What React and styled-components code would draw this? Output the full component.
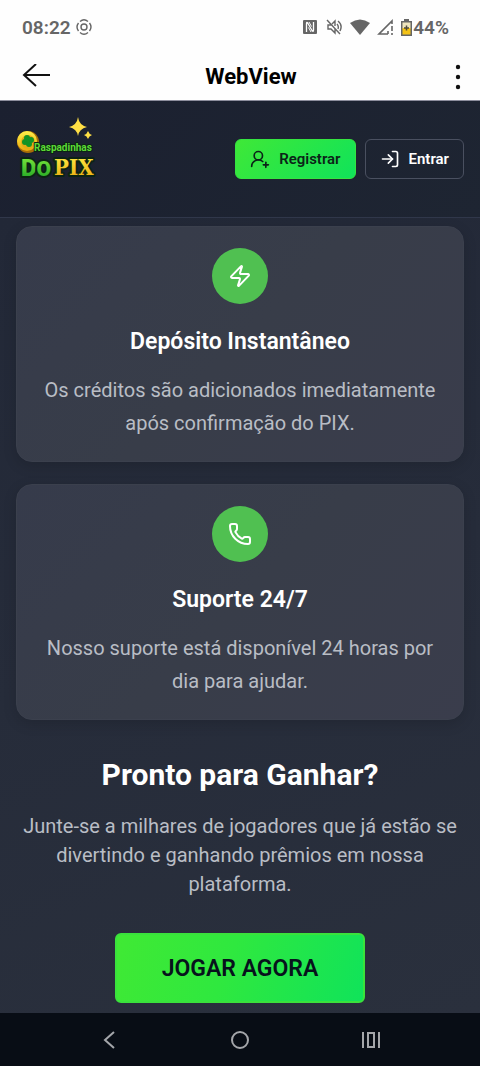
import React from "react";
import styled, { createGlobalStyle } from "styled-components";
import { LogIn, Phone, UserRoundPlus, Zap } from "lucide-react";

const features = [
	{
		id: "deposit",
		icon: Zap,
		title: "Depósito Instantâneo",
		text: "Os créditos são adicionados imediatamente após confirmação do PIX.",
	},
	{
		id: "support",
		icon: Phone,
		title: "Suporte 24/7",
		text: "Nosso suporte está disponível 24 horas por dia para ajudar.",
	},
];

const GlobalStyle = createGlobalStyle`
	* {
		box-sizing: border-box;
	}
	body {
		margin: 0;
		background: #242a38;
		font-family: Roboto, "Liberation Sans", sans-serif;
	}
	h1, h2, h3, p {
		margin: 0;
	}
	button {
		font-family: inherit;
		cursor: pointer;
	}
`;

const Page = styled.div`
	display: flex;
	flex-direction: column;
	min-height: 100vh;
`;

const StatusBar = styled.div`
	display: flex;
	align-items: center;
	justify-content: space-between;
	height: 54px;
	padding: 0 31px 0 22px;
	background: #fefefe;
	color: #666;
	font-size: 19px;
	font-weight: 600;
`;

const StatusGroup = styled.div`
	display: flex;
	align-items: center;
	gap: ${(props) => props.$gap}px;
`;

const AppBar = styled.div`
	display: grid;
	grid-template-columns: 64px 1fr 48px;
	align-items: center;
	height: 47px;
	padding: 0 14px 0 20px;
	background: #fefefe;
	border-bottom: 1px solid #8d8e9d;
`;

const AppTitle = styled.h1`
	color: #000;
	font-size: 22px;
	font-weight: 700;
	line-height: 28px;
	text-align: center;
`;

const BarButton = styled.button`
	display: flex;
	align-items: center;
	justify-self: ${(props) => props.$side};
	padding: 0;
	border: 0;
	background: none;
	color: ${(props) => props.$color || "#111"};
`;

const Header = styled.header`
	display: flex;
	align-items: center;
	justify-content: space-between;
	height: 117px;
	padding: 0 16px;
	background: linear-gradient(135deg, #1b2030, #1e2532);
	border-bottom: 1px solid #30374a;
`;

const LogoLink = styled.a`
	display: block;
	height: 86px;
`;

const HeaderActions = styled.div`
	display: flex;
	gap: 9px;
`;

const HeaderButton = styled.button`
	display: flex;
	align-items: center;
	gap: 9px;
	height: 40px;
	padding: 0 14px;
	border-radius: 6px;
	border: 1px solid #4a5060;
	background: transparent;
	color: #fff;
	font-size: 15px;
	font-weight: 600;
	line-height: 20px;
`;

const RegisterButton = styled(HeaderButton)`
	border-color: #35e441;
	background: linear-gradient(135deg, #3fe837, #10e35a);
	color: #0b2418;
`;

const Main = styled.main`
	flex: 1;
	padding: 8px 16px 10px;
	background: linear-gradient(160deg, #222837, #2a303d);
`;

const Features = styled.section`
	display: grid;
	gap: 22px;
`;

const Card = styled.article`
	display: flex;
	flex-direction: column;
	align-items: center;
	padding: 21px;
	border: 1px solid #3b404d;
	border-radius: 16px;
	background: linear-gradient(135deg, #363b4b, #383d49 50%, #3a3d4c);
	box-shadow: 0 4px 14px rgba(0, 0, 0, 0.14);
	text-align: center;
`;

const IconCircle = styled.div`
	display: flex;
	align-items: center;
	justify-content: center;
	width: 56px;
	height: 56px;
	border-radius: 50%;
	background: #50c051;
	color: #fff;
`;

const CardTitle = styled.h3`
	margin-top: 22px;
	color: #fff;
	font-size: 23px;
	font-weight: 600;
	line-height: 32px;
`;

const CardText = styled.p`
	margin-top: 16px;
	color: #b9bdc5;
	font-size: 20px;
	line-height: 33px;
`;

const CallToAction = styled.section`
	display: flex;
	flex-direction: column;
	align-items: center;
	margin-top: 34px;
	text-align: center;
`;

const CtaTitle = styled.h2`
	color: #fff;
	font-size: 30px;
	font-weight: 700;
	line-height: 42px;
`;

const CtaText = styled.p`
	margin-top: 16px;
	color: #b9bdc5;
	font-size: 20px;
	line-height: 29px;
`;

const PlayButton = styled.button`
	height: 70px;
	margin-top: 34px;
	padding: 0 45px;
	border: 2px solid #3ae23c;
	border-radius: 6px;
	background: linear-gradient(110deg, #40e934, #2fe83f 45%, #10e35a);
	color: #07131c;
	font-size: 23px;
	font-weight: 600;
`;

const NavBar = styled.nav`
	display: grid;
	grid-template-columns: repeat(3, 1fr);
	justify-items: center;
	align-items: center;
	height: 54px;
	padding: 0 44px;
	background: #080d15;
`;

function Logo() {
	return (
		<svg width="84" height="86" viewBox="0 0 84 86" role="img" aria-label="Raspadinhas do PIX">
			<defs>
				<linearGradient id="gold" x1="0" y1="0" x2="0" y2="1">
					<stop offset="0" stopColor="#fff04a" />
					<stop offset="1" stopColor="#e9a90c" />
				</linearGradient>
				<linearGradient id="green" x1="0" y1="0" x2="0" y2="1">
					<stop offset="0" stopColor="#86ee3f" />
					<stop offset="1" stopColor="#169f22" />
				</linearGradient>
			</defs>
			<ellipse cx="12" cy="26" rx="11" ry="11" fill="#a86d06" />
			<ellipse cx="11" cy="25" rx="10" ry="10" fill="url(#gold)" />
			<circle cx="12" cy="26" r="7" fill="#e4ac16" />
			<g fill="#149325">
				<circle cx="11" cy="22" r="3" />
				<circle cx="15" cy="24" r="3" />
				<circle cx="9" cy="26" r="3" />
				<circle cx="13" cy="28" r="3" />
			</g>
			<path d="M62 1 Q63 9 71 11 Q63 13 62 20 Q61 13 53 11 Q61 9 62 1Z" fill="#ffdf45" />
			<path d="M72 15 Q73 18 76 19 Q73 20 72 23 Q71 20 68 19 Q71 18 72 15Z" fill="#ffdf45" />
			<g
				fontFamily="Roboto, sans-serif"
				fontWeight="900"
				stroke="#0b2413"
				paintOrder="stroke"
				strokeLinejoin="round"
			>
				<text x="5" y="60" fontSize="24" strokeWidth="4" fill="url(#green)">
					D<tspan fontSize="21">O</tspan>
				</text>
				<text
					x="38"
					y="59"
					fontSize="22"
					strokeWidth="4"
					fill="url(#gold)"
					fontFamily="'DejaVu Serif Condensed', 'DejaVu Serif', serif"
				>
					PIX
				</text>
				<text x="18" y="35" fontSize="10" fontWeight="700" strokeWidth="2" fill="#5ddb36">
					Raspadinhas
				</text>
			</g>
		</svg>
	);
}

function StatusIcons() {
	return (
		<>
			<svg width="16" height="16" viewBox="0 0 16 16">
				<rect x="1" y="1" width="14" height="14" rx="1" fill="#666" />
				<path
					d="M4.500 13V4.500Q4.500 2.500 6 4.500L10 11.500Q11.500 13.500 11.500 11V3"
					fill="none"
					stroke="#fefefe"
					strokeWidth="1.300"
				/>
				<path d="M7 3l2.500 4.500M6.500 8.500L9 13" stroke="#fefefe" strokeWidth="1" />
			</svg>
			<svg width="18" height="16" viewBox="0 0 18 16" fill="none" stroke="#666" strokeWidth="1.4">
				<path d="M2 1l13 14M7 5l3-3v5M10 10v4l-4-4H3V6h3M12 5q2 2 1 5M13 2q5 4 2 10" />
			</svg>
			<svg width="20" height="16" viewBox="0 0 20 16">
				<path d="M0 4Q10 -3 20 4L10 16Z" fill="#666" />
			</svg>
			<svg width="17" height="16" viewBox="0 0 17 16" fill="none" stroke="#666" strokeWidth="1.6">
				<path d="M11 15H2L15 2v3M15 7v5M15 14v2M11 15v-3" />
			</svg>
		</>
	);
}

function Battery() {
	return (
		<svg width="11" height="17" viewBox="0 0 11 17">
			<path d="M3 0h5v2h3v15H0V2h3Z" fill="#666" />
			<path d="M1.5 3.5h8v6h-8Z" fill="#eee4bd" />
			<path d="M1.5 9h8v6.5h-8Z" fill="#f3c216" />
			<path d="M5.5 6.5v5M3 9h5" stroke="#4f4a3b" strokeWidth="1.5" />
		</svg>
	);
}

function App() {
	return (
		<Page>
			<GlobalStyle />
			<StatusBar>
				<StatusGroup $gap={5}>
					<span>08:22</span>
					<svg width="16" height="16" viewBox="0 0 16 16" fill="none" stroke="#666" strokeWidth="1.4">
						<circle cx="8" cy="8" r="3" />
						<path d="M4 2.500Q8 -1 12 2.500M13.500 4Q16.500 8 13.500 12M12 13.500Q8 17 4 13.500M2.500 12Q-.5 8 2.500 4" />
					</svg>
				</StatusGroup>
				<StatusGroup $gap={7}>
					<StatusIcons />
					<StatusGroup $gap={1}>
						<Battery />
						<span>44%</span>
					</StatusGroup>
				</StatusGroup>
			</StatusBar>
			<AppBar>
				<BarButton type="button" aria-label="Voltar" $side="start">
					<svg width="32" height="26" viewBox="0 0 32 26" fill="none" stroke="currentColor" strokeWidth="2">
						<path d="M30 11H4M16 0L4 11l12 11" />
					</svg>
				</BarButton>
				<AppTitle>WebView</AppTitle>
				<BarButton type="button" aria-label="Mais opções" $side="end">
					<svg width="16" height="26" viewBox="0 0 16 26" fill="currentColor">
						<circle cx="8" cy="3" r="2.200" />
						<circle cx="8" cy="13" r="2.200" />
						<circle cx="8" cy="23" r="2.200" />
					</svg>
				</BarButton>
			</AppBar>
			<Header>
				<LogoLink href="#">
					<Logo />
				</LogoLink>
				<HeaderActions>
					<RegisterButton type="button">
						<UserRoundPlus size={20} />
						Registrar
					</RegisterButton>
					<HeaderButton type="button">
						<LogIn size={20} />
						Entrar
					</HeaderButton>
				</HeaderActions>
			</Header>
			<Main>
				<Features>
					{features.map(({ id, icon: Icon, title, text }) => (
						<Card key={id}>
							<IconCircle>
								<Icon size={24} strokeWidth={2} />
							</IconCircle>
							<CardTitle>{title}</CardTitle>
							<CardText>{text}</CardText>
						</Card>
					))}
				</Features>
				<CallToAction>
					<CtaTitle>Pronto para Ganhar?</CtaTitle>
					<CtaText>
						Junte-se a milhares de jogadores que já estão se divertindo e ganhando prêmios em nossa
						plataforma.
					</CtaText>
					<PlayButton type="button">JOGAR AGORA</PlayButton>
				</CallToAction>
			</Main>
			<NavBar>
				<BarButton type="button" aria-label="Voltar no sistema" $side="center" $color="#a4a6aa">
					<svg width="14" height="20" viewBox="0 0 14 20" fill="none" stroke="currentColor" strokeWidth="2">
						<path d="M12 2L3 10l9 8" />
					</svg>
				</BarButton>
				<BarButton type="button" aria-label="Início" $side="center" $color="#a4a6aa">
					<svg width="20" height="20" viewBox="0 0 20 20" fill="none" stroke="currentColor" strokeWidth="2">
						<circle cx="10" cy="10" r="8" />
					</svg>
				</BarButton>
				<BarButton type="button" aria-label="Recentes" $side="center" $color="#a4a6aa">
					<svg width="20" height="18" viewBox="0 0 20 18" fill="none" stroke="currentColor" strokeWidth="2">
						<path d="M2 1v16M18 1v16M7 2h6v14H7Z" />
					</svg>
				</BarButton>
			</NavBar>
		</Page>
	);
}

export default App;
